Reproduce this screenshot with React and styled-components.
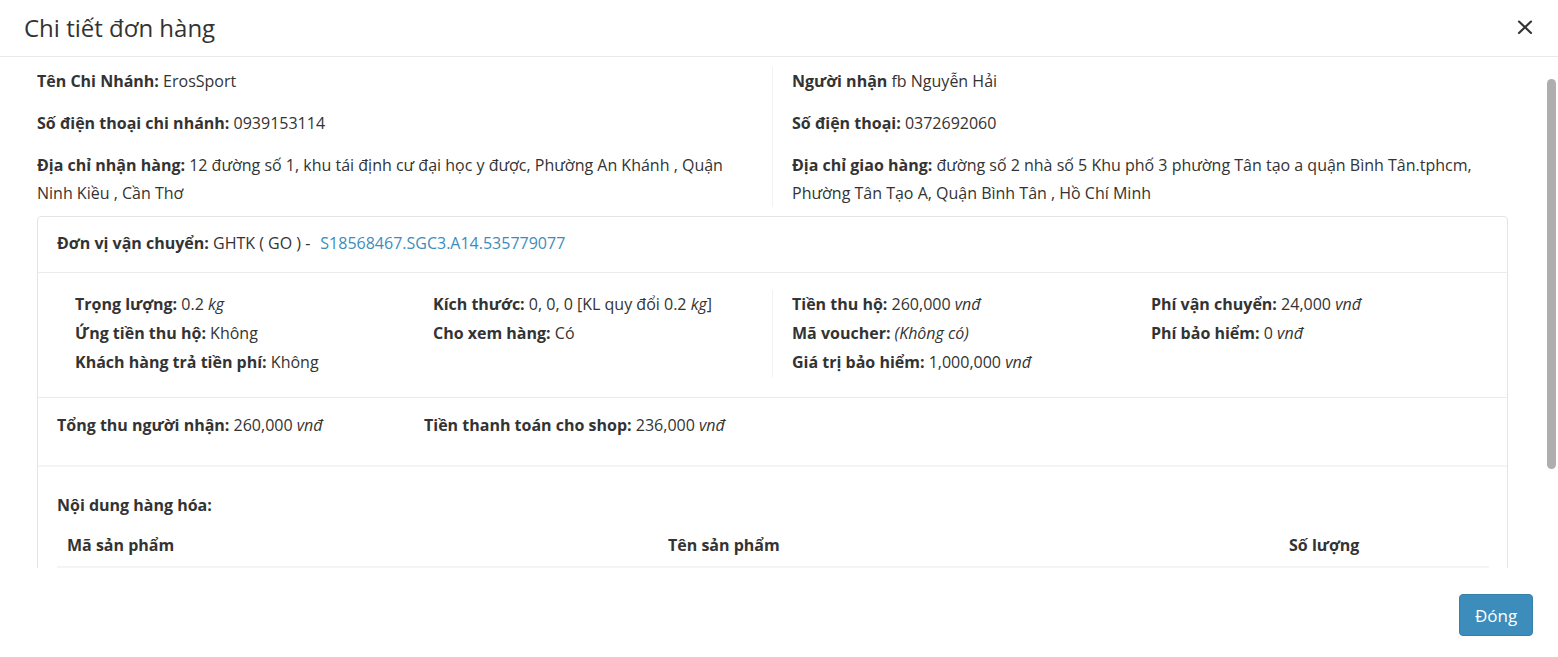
import React from 'react'
import styled, { createGlobalStyle } from 'styled-components'

const GlobalStyle = createGlobalStyle`
    html, body {
        margin: 0;
        padding: 0;
        background: #fff;
    }
    body {
        font-family: "Segoe UI", "Open Sans", "Noto Sans", sans-serif;
        color: #333;
    }
`

const Modal = styled.div`
    width: 1558px;
    height: 657px;
    display: flex;
    flex-direction: column;
    background: #fff;
    overflow: hidden;
`

const Header = styled.header`
    height: 57px;
    box-sizing: border-box;
    border-bottom: 1px solid #e9e9e9;
    display: flex;
    align-items: center;
    justify-content: space-between;
    padding: 0 25px 2px 24px;
`

const Title = styled.h4`
    margin: 0;
    font-size: 24px;
    font-weight: 400;
    color: #333;
`

const CloseButton = styled.button`
    border: 0;
    background: none;
    padding: 0;
    width: 16px;
    height: 16px;
    display: flex;
    cursor: pointer;
    color: #333;
`

const BodyWrap = styled.div`
    position: relative;
    height: 511px;
`

const Body = styled.div`
    height: 100%;
    overflow: hidden;
    padding: 10px 50px 0 37px;
    box-sizing: border-box;
`

const ScrollThumb = styled.div`
    position: absolute;
    top: 22px;
    right: 2px;
    width: 9px;
    height: 390px;
    border-radius: 5px;
    background: #aeaeb0;
`

const TopRow = styled.div`
    display: grid;
    grid-template-columns: 735px 736px;
    margin-bottom: 9px;
`

const TopCol = styled.div`
    padding-left: ${p => (p.$divided ? '19px' : '0')};
    padding-right: 15px;
    border-left: ${p => (p.$divided ? '1px solid #f2f2f2' : 'none')};
    box-sizing: border-box;
`

const Line = styled.p`
    margin: 0 0 14px;
    font-size: 16px;
    line-height: 28px;
    &:last-child {
        margin-bottom: 0;
    }
`

const Label = styled.b`
    font-weight: 700;
`

const Card = styled.section`
    border: 1px solid #e4e4e4;
    border-radius: 4px;
    width: 1471px;
    box-sizing: border-box;
    padding-bottom: 60px;
`

const CardHeader = styled.div`
    padding: 12px 19px 15px;
    border-bottom: 1px solid #ececec;
    font-size: 16px;
    line-height: 28px;
`

const Link = styled.a`
    color: #3c8dbc;
    text-decoration: none;
    margin-left: 10px;
`

const Details = styled.div`
    display: grid;
    grid-template-columns: 734px 735px;
    padding: 17px 0 20px;
    border-bottom: 1px solid #ececec;
`

const DetailHalf = styled.div`
    display: grid;
    grid-template-columns: ${p => (p.$divided ? '359px 1fr' : '358px 1fr')};
    align-content: start;
    padding-left: ${p => (p.$divided ? '19px' : '37px')};
    border-left: ${p => (p.$divided ? '1px solid #f2f2f2' : 'none')};
`

const Field = styled.div`
    font-size: 16px;
    line-height: 29px;
    white-space: nowrap;
`

const Totals = styled.div`
    display: grid;
    grid-template-columns: 367px 1fr;
    padding: 13px 19px 26px;
    border-bottom: 2px solid #f4f4f4;
    font-size: 16px;
    line-height: 28px;
`

const Goods = styled.div`
    padding: 24px 19px 0;
`

const GoodsTitle = styled.div`
    font-size: 16px;
    font-weight: 700;
    line-height: 28px;
`

const Table = styled.table`
    margin-top: 5px;
    width: 1432px;
    border-collapse: collapse;
    table-layout: fixed;
`

const Th = styled.th`
    width: ${p => p.$w}px;
    box-sizing: border-box;
    text-align: left;
    padding: 7px 10px;
    font-size: 16px;
    line-height: 28px;
    font-weight: 700;
    border-bottom: 2px solid #f4f4f4;
`

const Footer = styled.footer`
    flex: 1;
    display: flex;
    justify-content: flex-end;
    align-items: flex-start;
    padding: 26px 25px 0 0;
`

const PrimaryButton = styled.button`
    width: 74px;
    height: 42px;
    background: #3c8dbc;
    border: 1px solid #367fa9;
    border-radius: 4px;
    color: #fff;
    font-family: inherit;
    font-size: 17px;
    cursor: pointer;
`

const Unit = styled.em`
    font-style: italic;
`

const details = {
    left: [
        [['Trọng lượng:', <>0.2 <Unit>kg</Unit></>], ['Kích thước:', <>0, 0, 0 [KL quy đổi 0.2 <Unit>kg</Unit>]</>]],
        [['Ứng tiền thu hộ:', 'Không'], ['Cho xem hàng:', 'Có']],
        [['Khách hàng trả tiền phí:', 'Không'], null],
    ],
    right: [
        [['Tiền thu hộ:', <>260,000 <Unit>vnđ</Unit></>], ['Phí vận chuyển:', <>24,000 <Unit>vnđ</Unit></>]],
        [['Mã voucher:', <Unit>(Không có)</Unit>], ['Phí bảo hiểm:', <>0 <Unit>vnđ</Unit></>]],
        [['Giá trị bảo hiểm:', <>1,000,000 <Unit>vnđ</Unit></>], null],
    ],
}

const renderFields = rows =>
    rows.flat().map((f, i) =>
        f ? (
            <Field key={i}>
                <Label>{f[0]}</Label> {f[1]}
            </Field>
        ) : (
            <Field key={i} />
        )
    )

export default function App() {
    return (
        <Modal>
            <GlobalStyle />
            <Header>
                <Title>Chi tiết đơn hàng</Title>
                <CloseButton aria-label="Đóng">
                    <svg width="16" height="16" viewBox="0 0 16 16">
                        <path d="M2 2.5 L14 14 M14 2.5 L2 14" stroke="currentColor" strokeWidth="2.1" strokeLinecap="round" />
                    </svg>
                </CloseButton>
            </Header>

            <BodyWrap>
                <Body>
                    <TopRow>
                        <TopCol>
                            <Line><Label>Tên Chi Nhánh:</Label> ErosSport</Line>
                            <Line><Label>Số điện thoại chi nhánh:</Label> 0939153114</Line>
                            <Line><Label>Địa chỉ nhận hàng:</Label> 12 đường số 1, khu tái định cư đại học y được, Phường An Khánh , Quận Ninh Kiều , Cần Thơ</Line>
                        </TopCol>
                        <TopCol $divided>
                            <Line><Label>Người nhận</Label> fb Nguyễn Hải</Line>
                            <Line><Label>Số điện thoại:</Label> 0372692060</Line>
                            <Line><Label>Địa chỉ giao hàng:</Label> đường số 2 nhà số 5 Khu phố 3 phường Tân tạo a quận Bình Tân.tphcm, Phường Tân Tạo A, Quận Bình Tân , Hồ Chí Minh</Line>
                        </TopCol>
                    </TopRow>

                    <Card>
                        <CardHeader>
                            <Label>Đơn vị vận chuyển:</Label> GHTK ( GO ) -<Link href="#">S18568467.SGC3.A14.535779077</Link>
                        </CardHeader>

                        <Details>
                            <DetailHalf>{renderFields(details.left)}</DetailHalf>
                            <DetailHalf $divided>{renderFields(details.right)}</DetailHalf>
                        </Details>

                        <Totals>
                            <div><Label>Tổng thu người nhận:</Label> 260,000 <Unit>vnđ</Unit></div>
                            <div><Label>Tiền thanh toán cho shop:</Label> 236,000 <Unit>vnđ</Unit></div>
                        </Totals>

                        <Goods>
                            <GoodsTitle>Nội dung hàng hóa:</GoodsTitle>
                            <Table>
                                <thead>
                                    <tr>
                                        <Th $w={601}>Mã sản phẩm</Th>
                                        <Th $w={621}>Tên sản phẩm</Th>
                                        <Th $w={210}>Số lượng</Th>
                                    </tr>
                                </thead>
                            </Table>
                        </Goods>
                    </Card>
                </Body>
                <ScrollThumb />
            </BodyWrap>

            <Footer>
                <PrimaryButton>Đóng</PrimaryButton>
            </Footer>
        </Modal>
    )
}
